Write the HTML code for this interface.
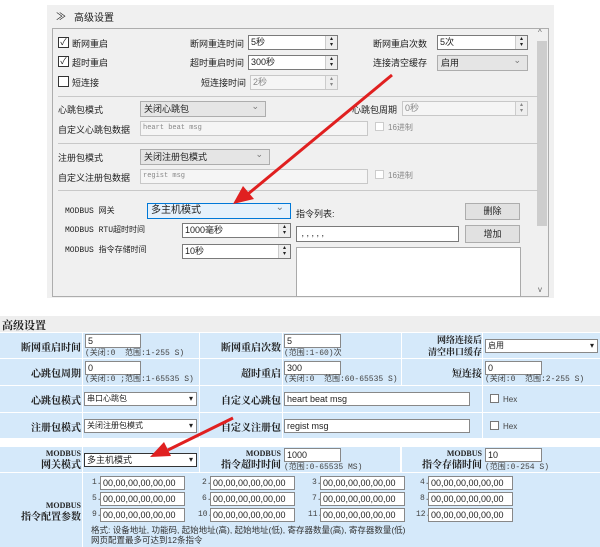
<!DOCTYPE html>
<html><head><meta charset="utf-8"><style>
*{box-sizing:border-box;margin:0;padding:0}
body{width:600px;height:547px;background:#fff;position:relative;overflow:hidden;font-family:"Liberation Sans","Noto Sans CJK SC",sans-serif;font-size:9px;color:#222}
.a{position:absolute;white-space:nowrap}
.panel{position:absolute;left:47px;top:5px;width:507px;height:293px;background:#f0f0f0}
.box{position:absolute;left:52px;top:28px;width:497px;height:269px;border:1px solid #adadad;background:#f0f0f0}
.inp{position:absolute;height:15px;border:1px solid #7a7a7a;background:#fff;font-size:9px;line-height:13px;padding-left:2px}
.dis{border-color:#c8c8c8;background:#f5f5f5;color:#888}
.spin{position:absolute;right:0;top:0;width:12px;height:13px;border-left:1px solid #ccc;background:#eee;font-size:6px;line-height:6px;text-align:center}
.sel{position:absolute;height:16px;border:1px solid #adadad;background:#e5e5e5;font-size:9px;line-height:14px;padding-left:3px}
.sel:after{content:"⌄";position:absolute;right:6px;top:-3px;color:#777}
.cb{position:absolute;width:11px;height:11px;border:1px solid #333;background:#fff;font-size:9px;line-height:9px;text-align:center}
.sep{position:absolute;left:58px;width:480px;height:1px;background:#c8c8c8}
.btn{position:absolute;border:1px solid #adadad;background:#e1e1e1;text-align:center;font-size:9px}
.mono{font-family:"Liberation Mono","Noto Sans CJK SC",monospace;font-size:7px}
.mb{font-family:"Liberation Mono","Noto Sans CJK SC",monospace;font-size:8px}
.cell{position:absolute;background:#d5e9fa}
.b{font-family:"Liberation Serif","Noto Serif CJK SC",serif;font-weight:bold;font-size:10px}
.r{text-align:right}
.ti{position:absolute;height:14px;border:1px solid #888;background:#fff;font-size:9px;line-height:12px;padding-left:2px}
.sm{font-family:"Liberation Mono","Noto Sans CJK SC",monospace;font-size:8px;color:#444}
.hx{position:absolute;font-size:8px;color:#444}
.hx i{display:inline-block;width:9px;height:9px;border:1px solid #777;background:#fff;vertical-align:-1px;margin-right:4px}
</style></head><body>
<div class="panel"></div>
<div class="a" style="left:56px;top:8px;font-size:10px">≫</div>
<div class="a" style="left:74px;top:9px;font-size:10px">高级设置</div>
<div class="box"></div>
<div style="position:absolute;left:536px;top:29px;width:12px;height:267px;background:#f0f0f0"></div>
<div style="position:absolute;left:537px;top:41px;width:10px;height:185px;background:#cdcdcd"></div>
<div class="a" style="left:538px;top:28px;font-size:8px;color:#666">^</div>
<div class="a" style="left:538px;top:285px;font-size:8px;color:#666">v</div>

<div class="cb" style="left:58px;top:37px">✓</div><div class="a" style="left:72px;top:37px">断网重启</div>
<div class="cb" style="left:58px;top:56px">✓</div><div class="a" style="left:72px;top:56px">超时重启</div>
<div class="cb" style="left:58px;top:76px"></div><div class="a" style="left:72px;top:76px">短连接</div>

<div class="a r" style="left:160px;width:84px;top:37px">断网重连时间</div>
<div class="inp" style="left:248px;top:35px;width:90px">5秒<div class="spin">▴<br>▾</div></div>
<div class="a r" style="left:160px;width:84px;top:56px">超时重启时间</div>
<div class="inp" style="left:248px;top:55px;width:90px">300秒<div class="spin">▴<br>▾</div></div>
<div class="a r" style="left:160px;width:86px;top:76px">短连接时间</div>
<div class="inp dis" style="left:250px;top:75px;width:88px">2秒<div class="spin">▴<br>▾</div></div>

<div class="a" style="left:373px;top:37px">断网重启次数</div>
<div class="inp" style="left:437px;top:35px;width:91px">5次<div class="spin">▴<br>▾</div></div>
<div class="a" style="left:373px;top:56px">连接清空缓存</div>
<div class="sel" style="left:437px;top:55px;width:91px">启用</div>

<div class="sep" style="top:96px"></div>
<div class="a" style="left:58px;top:103px">心跳包模式</div>
<div class="sel" style="left:140px;top:101px;width:126px">关闭心跳包</div>
<div class="a" style="left:352px;top:103px">心跳包周期</div>
<div class="inp dis" style="left:402px;top:101px;width:126px">0秒<div class="spin">▴<br>▾</div></div>
<div class="a" style="left:58px;top:123px">自定义心跳包数据</div>
<div class="inp dis mono" style="left:140px;top:121px;width:228px">heart beat msg</div>
<div class="hx" style="left:375px;top:122px;color:#888"><i style="border-color:#ccc"></i>16进制</div>

<div class="sep" style="top:143px"></div>
<div class="a" style="left:58px;top:151px">注册包模式</div>
<div class="sel" style="left:140px;top:149px;width:130px">关闭注册包模式</div>
<div class="a" style="left:58px;top:171px">自定义注册包数据</div>
<div class="inp dis mono" style="left:140px;top:169px;width:228px">regist msg</div>
<div class="hx" style="left:375px;top:170px;color:#888"><i style="border-color:#ccc"></i>16进制</div>

<div class="sep" style="top:190px"></div>
<div class="a mb" style="left:65px;top:205px">MODBUS 网关</div>
<div class="sel" style="left:147px;top:203px;width:144px;background:#e5f1fb;border-color:#0078d7;font-size:10px">多主机模式</div>
<div class="a mb" style="left:65px;top:224px">MODBUS RTU超时时间</div>
<div class="inp" style="left:182px;top:223px;width:109px">1000毫秒<div class="spin">▴<br>▾</div></div>
<div class="a mb" style="left:65px;top:244px">MODBUS 指令存储时间</div>
<div class="inp" style="left:182px;top:244px;width:109px">10秒<div class="spin">▴<br>▾</div></div>
<div class="a" style="left:296px;top:207px">指令列表:</div>
<div class="btn" style="left:465px;top:203px;width:55px;height:17px;line-height:15px">删除</div>
<div class="inp" style="left:296px;top:226px;width:163px;height:16px">&nbsp;, , , , ,</div>
<div class="btn" style="left:465px;top:225px;width:55px;height:18px;line-height:16px">增加</div>
<div class="inp" style="left:296px;top:247px;width:225px;height:50px;border-color:#aaa"></div>

<div style="position:absolute;left:0;top:316px;width:600px;height:16px;background:#eee"></div>
<div class="a b" style="left:2px;top:317px;font-size:11px">高级设置</div>

<div class="cell" style="left:0;top:333px;width:82px;height:25px"></div>
<div class="cell" style="left:83px;top:333px;width:116px;height:25px"></div>
<div class="cell" style="left:200px;top:333px;width:82px;height:25px"></div>
<div class="cell" style="left:283px;top:333px;width:118px;height:25px"></div>
<div class="cell" style="left:402px;top:333px;width:80px;height:25px"></div>
<div class="cell" style="left:483px;top:333px;width:117px;height:25px"></div>

<div class="cell" style="left:0;top:359px;width:82px;height:26px"></div>
<div class="cell" style="left:83px;top:359px;width:116px;height:26px"></div>
<div class="cell" style="left:200px;top:359px;width:82px;height:26px"></div>
<div class="cell" style="left:283px;top:359px;width:118px;height:26px"></div>
<div class="cell" style="left:402px;top:359px;width:80px;height:26px"></div>
<div class="cell" style="left:483px;top:359px;width:117px;height:26px"></div>

<div class="cell" style="left:0;top:386px;width:82px;height:26px"></div>
<div class="cell" style="left:83px;top:386px;width:116px;height:26px"></div>
<div class="cell" style="left:200px;top:386px;width:82px;height:26px"></div>
<div class="cell" style="left:283px;top:386px;width:199px;height:26px"></div>
<div class="cell" style="left:483px;top:386px;width:117px;height:26px"></div>

<div class="cell" style="left:0;top:413px;width:82px;height:25px"></div>
<div class="cell" style="left:83px;top:413px;width:116px;height:25px"></div>
<div class="cell" style="left:200px;top:413px;width:82px;height:25px"></div>
<div class="cell" style="left:283px;top:413px;width:199px;height:25px"></div>
<div class="cell" style="left:483px;top:413px;width:117px;height:25px"></div>

<div class="cell" style="left:0;top:447px;width:82px;height:25px"></div>
<div class="cell" style="left:83px;top:447px;width:116px;height:25px"></div>
<div class="cell" style="left:200px;top:447px;width:200px;height:25px"></div>
<div class="cell" style="left:402px;top:447px;width:198px;height:25px"></div>

<div class="cell" style="left:0;top:473px;width:82px;height:74px"></div>
<div class="cell" style="left:83px;top:473px;width:517px;height:74px"></div>

<div class="a b r" style="left:0;width:81px;top:339px">断网重启时间</div>
<div class="ti" style="left:85px;top:334px;width:56px">5</div>
<div class="a sm" style="left:85px;top:347px">(关闭:0 &nbsp;范围:1-255 S)</div>
<div class="a b r" style="left:200px;width:81px;top:339px">断网重启次数</div>
<div class="ti" style="left:284px;top:334px;width:57px">5</div>
<div class="a sm" style="left:284px;top:347px">(范围:1-60)次</div>
<div class="a b r" style="left:402px;width:80px;top:334px;font-size:9px;line-height:12px">网络连接后<br>清空串口缓存</div>
<div class="ti" style="left:485px;top:339px;width:113px;font-size:8px">启用<span style="position:absolute;right:3px;font-size:8px">▾</span></div>

<div class="a b r" style="left:0;width:81px;top:365px">心跳包周期</div>
<div class="ti" style="left:85px;top:361px;width:56px">0</div>
<div class="a sm" style="left:85px;top:373px">(关闭:0 ;范围:1-65535 S)</div>
<div class="a b r" style="left:200px;width:81px;top:365px">超时重启</div>
<div class="ti" style="left:284px;top:361px;width:57px">300</div>
<div class="a sm" style="left:284px;top:373px">(关闭:0 &nbsp;范围:60-65535 S)</div>
<div class="a b r" style="left:402px;width:80px;top:365px">短连接</div>
<div class="ti" style="left:485px;top:361px;width:57px">0</div>
<div class="a sm" style="left:485px;top:373px">(关闭:0 &nbsp;范围:2-255 S)</div>

<div class="a b r" style="left:0;width:81px;top:392px">心跳包模式</div>
<div class="ti" style="left:84px;top:392px;width:113px;font-size:8px">串口心跳包<span style="position:absolute;right:3px;font-size:8px">▾</span></div>
<div class="a b r" style="left:200px;width:81px;top:392px">自定义心跳包</div>
<div class="ti" style="left:284px;top:392px;width:186px">heart beat msg</div>
<div class="hx" style="left:490px;top:394px"><i></i>Hex</div>

<div class="a b r" style="left:0;width:81px;top:419px">注册包模式</div>
<div class="ti" style="left:84px;top:419px;width:113px;font-size:8px">关闭注册包模式<span style="position:absolute;right:3px;font-size:8px">▾</span></div>
<div class="a b r" style="left:200px;width:81px;top:419px">自定义注册包</div>
<div class="ti" style="left:284px;top:419px;width:186px">regist msg</div>
<div class="hx" style="left:490px;top:421px"><i></i>Hex</div>

<div class="a b r" style="left:0;width:81px;top:448px;font-size:8px;line-height:12px">MODBUS<br><span style="font-size:10px">网关模式</span></div>
<div class="ti" style="left:84px;top:453px;width:113px;font-size:9px;border:1px solid #333">多主机模式<span style="position:absolute;right:3px;font-size:8px">▾</span></div>
<div class="a b r" style="left:200px;width:81px;top:448px;font-size:8px;line-height:12px">MODBUS<br><span style="font-size:10px">指令超时时间</span></div>
<div class="ti" style="left:284px;top:448px;width:57px">1000</div>
<div class="a sm" style="left:284px;top:461px">(范围:0-65535 MS)</div>
<div class="a b r" style="left:402px;width:80px;top:448px;font-size:8px;line-height:12px">MODBUS<br><span style="font-size:10px">指令存储时间</span></div>
<div class="ti" style="left:485px;top:448px;width:57px">10</div>
<div class="a sm" style="left:485px;top:461px">(范围:0-254 S)</div>

<div class="a b r" style="left:0;width:81px;top:500px;font-size:8px;line-height:12px">MODBUS<br><span style="font-size:10px">指令配置参数</span></div>

<div class="a sm" style="left:92px;top:478px">1.</div><div class="ti" style="left:100px;top:476px;width:85px">00,00,00,00,00,00</div>
<div class="a sm" style="left:202px;top:478px">2.</div><div class="ti" style="left:210px;top:476px;width:85px">00,00,00,00,00,00</div>
<div class="a sm" style="left:312px;top:478px">3.</div><div class="ti" style="left:320px;top:476px;width:85px">00,00,00,00,00,00</div>
<div class="a sm" style="left:420px;top:478px">4.</div><div class="ti" style="left:428px;top:476px;width:85px">00,00,00,00,00,00</div>
<div class="a sm" style="left:92px;top:494px">5.</div><div class="ti" style="left:100px;top:492px;width:85px">00,00,00,00,00,00</div>
<div class="a sm" style="left:202px;top:494px">6.</div><div class="ti" style="left:210px;top:492px;width:85px">00,00,00,00,00,00</div>
<div class="a sm" style="left:312px;top:494px">7.</div><div class="ti" style="left:320px;top:492px;width:85px">00,00,00,00,00,00</div>
<div class="a sm" style="left:420px;top:494px">8.</div><div class="ti" style="left:428px;top:492px;width:85px">00,00,00,00,00,00</div>
<div class="a sm" style="left:92px;top:510px">9.</div><div class="ti" style="left:100px;top:508px;width:85px">00,00,00,00,00,00</div>
<div class="a sm" style="left:198px;top:510px">10.</div><div class="ti" style="left:210px;top:508px;width:85px">00,00,00,00,00,00</div>
<div class="a sm" style="left:308px;top:510px">11.</div><div class="ti" style="left:320px;top:508px;width:85px">00,00,00,00,00,00</div>
<div class="a sm" style="left:416px;top:510px">12.</div><div class="ti" style="left:428px;top:508px;width:85px">00,00,00,00,00,00</div>
<div class="a" style="left:91px;top:524px;font-size:8.5px;color:#333">格式: 设备地址, 功能码, 起始地址(高), 起始地址(低), 寄存器数量(高), 寄存器数量(低)</div>
<div class="a" style="left:91px;top:534px;font-size:8.5px;color:#333">网页配置最多可达到12条指令</div>

<svg style="position:absolute;left:0;top:0" width="600" height="547">
<line x1="392" y1="75" x2="248" y2="194" stroke="#e02020" stroke-width="3"/>
<polygon points="233,204 243,186 254,199" fill="#e02020"/>
<line x1="233" y1="418" x2="168" y2="450" stroke="#e02020" stroke-width="3"/>
<polygon points="150,457 164,442 171,456" fill="#e02020"/>
</svg>
</body></html>
